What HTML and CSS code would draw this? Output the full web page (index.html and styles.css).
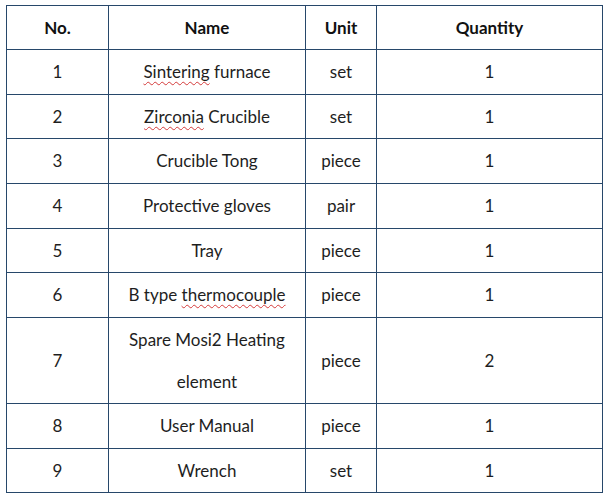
FILE: index.html
```html
<!DOCTYPE html>
<html>
<head>
<meta charset="utf-8">
<link rel="stylesheet" href="styles.css">
</head>
<body>
<table class="parts">
  <colgroup>
    <col class="c-no">
    <col class="c-name">
    <col class="c-unit">
    <col class="c-qty">
  </colgroup>
  <thead>
    <tr class="r44"><th>No.</th><th>Name</th><th>Unit</th><th>Quantity</th></tr>
  </thead>
  <tbody>
    <tr class="r45"><td>1</td><td><span class="spell">Sintering</span> furnace</td><td>set</td><td>1</td></tr>
    <tr class="r44"><td>2</td><td><span class="spell">Zirconia</span> Crucible</td><td>set</td><td>1</td></tr>
    <tr class="r45"><td>3</td><td>Crucible Tong</td><td>piece</td><td>1</td></tr>
    <tr class="r45"><td>4</td><td>Protective gloves</td><td>pair</td><td>1</td></tr>
    <tr class="r44"><td>5</td><td>Tray</td><td>piece</td><td>1</td></tr>
    <tr class="r45"><td>6</td><td>B type <span class="spell">thermocouple</span></td><td>piece</td><td>1</td></tr>
    <tr class="r86"><td>7</td><td class="tall">Spare Mosi2 Heating<br>element</td><td>piece</td><td>2</td></tr>
    <tr class="r45"><td>8</td><td>User Manual</td><td>piece</td><td>1</td></tr>
    <tr class="r44"><td>9</td><td>Wrench</td><td>set</td><td>1</td></tr>
  </tbody>
</table>
</body>
</html>
```
FILE: styles.css
```css
html, body {
  margin: 0;
  padding: 0;
  background: #ffffff;
}
body {
  padding: 5px 0 0 6px;
  font-family: "Lato", "Open Sans", sans-serif;
  font-size: 17px;
  color: #1e1e1e;
}
.parts {
  border-collapse: collapse;
  table-layout: fixed;
  width: 596px;
}
.c-no { width: 102px; }
.c-name { width: 197px; }
.c-unit { width: 71px; }
.c-qty { width: 226px; }
.parts th,
.parts td {
  border: 1px solid #27476a;
  text-align: center;
  vertical-align: middle;
  padding: 0;
  line-height: 20px;
}
.parts th {
  font-weight: bold;
  color: #111;
}
.r44 > * { height: 43px; }
.r45 > * { height: 44px; }
.r86 > * { height: 85px; }
.parts td.tall { line-height: 42px; }
.spell {
  text-decoration: underline wavy #d43a3a;
  text-decoration-thickness: 1px;
  text-underline-offset: 3px;
}
```
